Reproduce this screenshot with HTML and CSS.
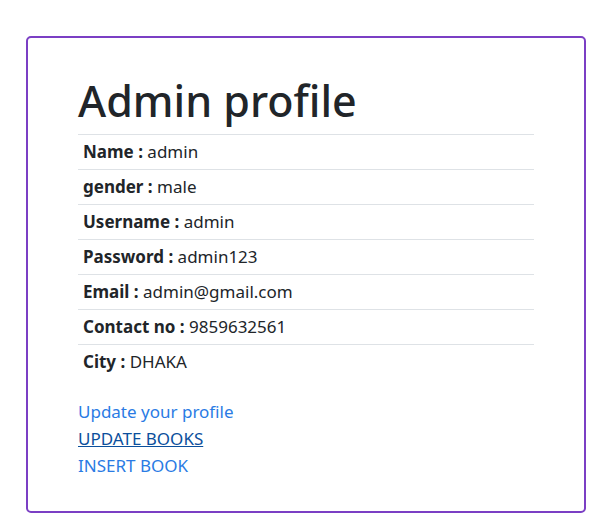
FILE: index.html
```html
<!DOCTYPE html>
<html lang="en">
<head>
<meta charset="utf-8">
<title>Admin profile</title>
<link rel="stylesheet" href="styles.css">
</head>
<body>
<div class="card">
  <h1 class="title">Admin profile</h1>
  <table class="info">
    <tr><td><b>Name :</b> admin</td></tr>
    <tr><td><b>gender :</b> male</td></tr>
    <tr><td><b>Username :</b> admin</td></tr>
    <tr><td><b>Password :</b> admin123</td></tr>
    <tr><td><b>Email :</b> admin@gmail.com</td></tr>
    <tr><td><b>Contact no :</b> 9859632561</td></tr>
    <tr><td><b>City :</b> DHAKA</td></tr>
  </table>
  <div class="links">
    <a href="#" class="link">Update your profile</a>
    <a href="#" class="link hover">UPDATE BOOKS</a>
    <a href="#" class="link">INSERT BOOK</a>
  </div>
</div>
</body>
</html>
```
FILE: styles.css
```css
html, body {
  margin: 0;
  padding: 0;
  background: #fff;
}
body {
  font-family: "Noto Sans", "Open Sans", sans-serif;
  font-size: 17px;
  color: #212529;
  padding: 36px 14px 13px 26px;
}
.card {
  box-sizing: border-box;
  width: 560px;
  height: 477px;
  border: 2px solid #7b3fc4;
  border-radius: 5px;
  padding: 38px 50px 0 50px;
}
.title {
  margin: 0 0 8px 0;
  font-size: 43px;
  font-weight: 500;
  line-height: 50px;
}
.info {
  width: 456px;
  border-collapse: collapse;
  margin-bottom: 19px;
}
.info td {
  border-top: 1px solid #dee2e6;
  padding: 5px 5px;
  line-height: 24px;
  height: 24px;
}
.info b {
  font-weight: 700;
}
.links {
  display: flex;
  flex-direction: column;
  align-items: flex-start;
}
.link {
  color: #2a7be4;
  text-decoration: none;
  line-height: 27px;
}
.link.hover {
  color: #0b4f9c;
  text-decoration: underline;
}
```
